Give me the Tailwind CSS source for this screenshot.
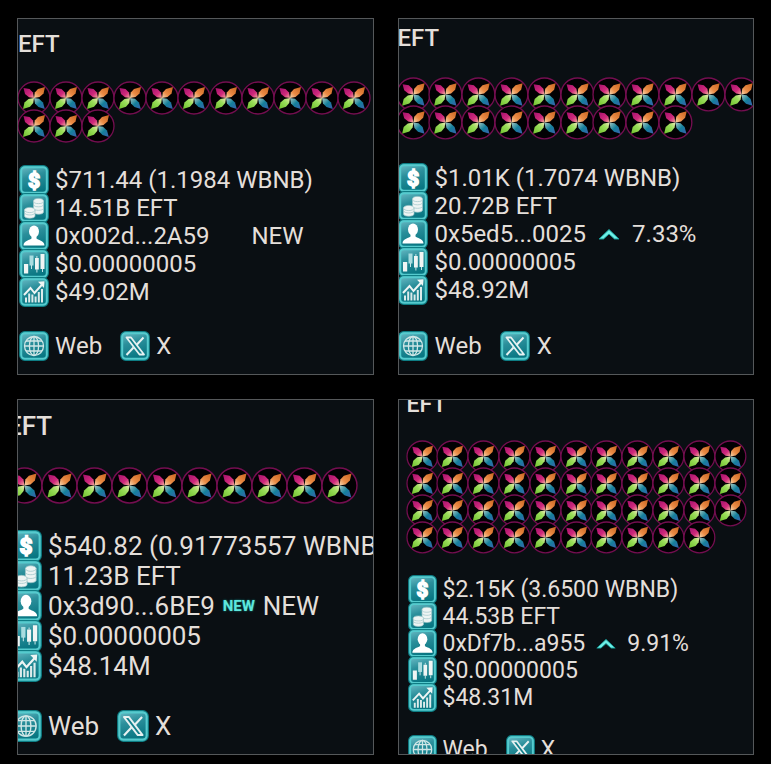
<!DOCTYPE html>
<html lang="en">
  <head>
    <meta charset="UTF-8" />
    <meta name="viewport" content="width=device-width, initial-scale=1.0" />
    <title>EFT Buys</title>
    <script src="https://cdn.jsdelivr.net/npm/@tailwindcss/browser@4"></script>
  </head>
  <body class="bg-black min-h-screen font-[Roboto,sans-serif] text-[#e4dfda]">
    <!-- icon sprite -->
    <svg class="absolute size-0" aria-hidden="true">
      <defs>
        <linearGradient id="tile" x1="0" y1="0" x2="0.3" y2="1">
          <stop offset="0" stop-color="#6fbfc9" />
          <stop offset="0.45" stop-color="#2b8f9b" />
          <stop offset="1" stop-color="#087682" />
        </linearGradient>
        <linearGradient id="pink" x1="0" y1="0" x2="1" y2="1">
          <stop offset="0" stop-color="#a3106c" />
          <stop offset="0.6" stop-color="#d02a7c" />
          <stop offset="1" stop-color="#f3b09a" />
        </linearGradient>
        <linearGradient id="orange" x1="1" y1="0" x2="0" y2="1">
          <stop offset="0" stop-color="#c8641f" />
          <stop offset="0.6" stop-color="#ea8b45" />
          <stop offset="1" stop-color="#f8d8b0" />
        </linearGradient>
        <linearGradient id="green" x1="0" y1="1" x2="1" y2="0">
          <stop offset="0" stop-color="#6fc02c" />
          <stop offset="0.6" stop-color="#9ade5a" />
          <stop offset="1" stop-color="#f0e8b8" />
        </linearGradient>
        <linearGradient id="blue" x1="1" y1="1" x2="0" y2="0">
          <stop offset="0" stop-color="#3a5fae" />
          <stop offset="0.5" stop-color="#14809c" />
          <stop offset="1" stop-color="#a8c8c0" />
        </linearGradient>
      </defs>
      <symbol id="flower" viewBox="0 0 32 32" overflow="visible">
        <circle cx="16" cy="16" r="16" fill="#020103" stroke="#740e50" stroke-width="1.3" />
        <path d="M16 16 11 15.200 7 12 5.500 6 11.500 7 15 10.500Z" fill="url(#pink)" />
        <path d="M16 16 16.800 10.500 20 7 27 5 25.500 11.500 21.500 15Z" fill="url(#orange)" />
        <path d="M16 16 15.200 21 12 24.800 5 27 6.500 20.500 10.500 17Z" fill="url(#green)" />
        <path d="M16 16 21 16.800 25 20.500 26.800 27 20.500 25 17 21.500Z" fill="url(#blue)" />
      </symbol>
      <symbol id="base" viewBox="0 0 30 30">
        <rect x="0.800" y="0.800" width="28.400" height="28.400" rx="5" fill="url(#tile)" stroke="#0e7d84" stroke-width="1.400" />
        <rect x="2.200" y="2.200" width="25.600" height="25.600" rx="3.800" fill="none" stroke="#55cbce" stroke-width="2" />
      </symbol>
      <symbol id="dollar" viewBox="0 0 30 30">
        <use href="#base" />
        <text x="15" y="22.500" text-anchor="middle" font-family="Roboto" font-size="21" font-weight="900" fill="#fff" stroke="#fff" stroke-width="1.500">$</text>
      </symbol>
      <symbol id="coins" viewBox="0 0 30 30">
        <use href="#base" />
        <g fill="#eef4f3" stroke="#9cc4c7" stroke-width="0.700">
          <path d="M14.500 8v11c0 3 10 3 10 0V8Z" />
          <ellipse cx="19.500" cy="8" rx="5" ry="2.600" />
          <path d="M14.500 12c1 2.400 9 2.400 10 0M14.500 15.500c1 2.400 9 2.400 10 0" fill="none" />
          <path d="M5.500 17v6c0 3 10.500 3 10.500 0v-6Z" />
          <ellipse cx="10.750" cy="17" rx="5.300" ry="2.600" />
          <path d="M5.500 20c1 2.600 9.500 2.600 10.500 0" fill="none" />
        </g>
      </symbol>
      <symbol id="user" viewBox="0 0 30 30">
        <use href="#base" />
        <ellipse cx="15" cy="10.500" rx="5" ry="6" fill="#fff" />
        <path d="M12.500 14h5v3.500c1 1.500 8 2 8 7H4.500c0-5 7-5.500 8-7Z" fill="#fff" />
      </symbol>
      <symbol id="candles" viewBox="0 0 30 30">
        <use href="#base" />
        <path d="M5 15h4.200v9.500H5ZM16 9h3.800v11.500H16ZM21.500 5h4v15h-4Z" fill="#f0f5f4" />
        <path d="M10.500 6.500h4v10h-4Z" fill="#a9dde0" />
        <path d="M12.500 16v4M17.900 7v2M17.900 20v3.500M23.500 20v3" stroke="#c4e6e7" stroke-width="1" />
      </symbol>
      <symbol id="chart" viewBox="0 0 30 30">
        <use href="#base" />
        <path d="M5 18 11.500 11l4 5 8.500-9.500" fill="none" stroke="#eef5f4" stroke-width="2" />
        <path d="M19 4.800 25.500 4.300 25 11Z" fill="#eef5f4" />
        <path d="M7 25.500v-5M10.200 25.500v-9M13.400 25.500v-8M16.600 25.500v-6M19.800 25.500V15M23 25.500V12" stroke="#dcebeb" stroke-width="2" />
      </symbol>
      <symbol id="globe" viewBox="0 0 30 30">
        <use href="#base" />
        <g fill="none" stroke="#cfe6e6" stroke-width="1.300">
          <circle cx="15" cy="15" r="9.500" />
          <ellipse cx="15" cy="15" rx="4.600" ry="9.500" />
          <path d="M15 5.500v19M5.500 15h19M7 10h16M7 20h16" />
        </g>
      </symbol>
      <symbol id="x-logo" viewBox="0 0 30 30">
        <use href="#base" />
        <path d="M23.500 6.500 16.500 14M13.500 16.500 6.500 24" stroke="#e6f1f1" stroke-width="2" />
        <path d="M6.500 6.500h4.500L24 23.500h-4.500Z" fill="#12808c" stroke="#e6f1f1" stroke-width="1.800" stroke-linejoin="round" />
      </symbol>
      <symbol id="up" viewBox="0 0 24 14">
        <path d="M2 12 12 2.500 22 12h-4.500L12 7 6.500 12Z" fill="#6ff0e6" stroke="#159a98" stroke-width="1" stroke-linejoin="round" />
      </symbol>
    </svg>

    <main class="grid grid-cols-2 gap-6 px-[17px] py-[18px]">
      <article class="aspect-square overflow-hidden border border-[#55585a] bg-[#0a0f13] text-2xl/[28px] whitespace-nowrap">
        <div class="flex flex-col gap-[26px] pt-[11px]">
          <h2 class="font-medium">EFT</h2>
          <div data-buys="14" class="grid w-[352px] grid-cols-11 auto-rows-[28px] items-center"></div>
          <ul class="pl-px">
            <li class="flex items-center gap-[6px]"><svg class="size-[30px] -my-px shrink-0"><use href="#dollar" /></svg>$711.44 (1.1984 WBNB)</li>
            <li class="flex items-center gap-[6px]"><svg class="size-[30px] -my-px shrink-0"><use href="#coins" /></svg>14.51B EFT</li>
            <li class="flex items-center gap-[6px]"><svg class="size-[30px] -my-px shrink-0"><use href="#user" /></svg>0x002d...2A59<span class="pl-9">NEW</span></li>
            <li class="flex items-center gap-[6px]"><svg class="size-[30px] -my-px shrink-0"><use href="#candles" /></svg>$0.00000005</li>
            <li class="flex items-center gap-[6px]"><svg class="size-[30px] -my-px shrink-0"><use href="#chart" /></svg>$49.02M</li>
          </ul>
          <nav class="flex gap-[18px] pl-px">
            <a href="#" class="flex items-center gap-[6px]"><svg class="size-[30px] -my-px shrink-0"><use href="#globe" /></svg>Web</a>
            <a href="#" class="flex items-center gap-[6px]"><svg class="size-[30px] -my-px shrink-0"><use href="#x-logo" /></svg>X</a>
          </nav>
        </div>
      </article>

      <article class="aspect-square overflow-hidden border border-[#55585a] bg-[#0a0f13] text-2xl/[28px] whitespace-nowrap">
        <div class="-ml-px flex flex-col gap-[28px] pt-[5px]">
          <h2 class="font-medium">EFT</h2>
          <div data-buys="20" class="-ml-px grid w-[361px] grid-cols-11 auto-rows-[28px] items-center"></div>
          <ul>
            <li class="flex items-center gap-[7px]"><svg class="size-[30px] -my-px shrink-0"><use href="#dollar" /></svg>$1.01K (1.7074 WBNB)</li>
            <li class="flex items-center gap-[7px]"><svg class="size-[30px] -my-px shrink-0"><use href="#coins" /></svg>20.72B EFT</li>
            <li class="flex items-center gap-[7px]"><svg class="size-[30px] -my-px shrink-0"><use href="#user" /></svg>0x5ed5...0025<svg class="mx-1 h-[14px] w-6 shrink-0"><use href="#up" /></svg>7.33%</li>
            <li class="flex items-center gap-[7px]"><svg class="size-[30px] -my-px shrink-0"><use href="#candles" /></svg>$0.00000005</li>
            <li class="flex items-center gap-[7px]"><svg class="size-[30px] -my-px shrink-0"><use href="#chart" /></svg>$48.92M</li>
          </ul>
          <nav class="flex gap-[18px]">
            <a href="#" class="flex items-center gap-[7px]"><svg class="size-[30px] -my-px shrink-0"><use href="#globe" /></svg>Web</a>
            <a href="#" class="flex items-center gap-[7px]"><svg class="size-[30px] -my-px shrink-0"><use href="#x-logo" /></svg>X</a>
          </nav>
        </div>
      </article>

      <article class="aspect-square overflow-hidden border border-[#55585a] bg-[#0a0f13] text-[26px]/[30px] whitespace-nowrap">
        <div class="-ml-[10px] flex flex-col gap-[30px] pt-[11px]">
          <h2 class="-ml-px font-medium">EFT</h2>
          <div data-buys="10" class="-ml-px grid w-[350px] grid-cols-10 auto-rows-[30px] items-center"></div>
          <ul class="pl-0.5">
            <li class="flex items-center gap-[6px]"><svg class="size-8 -my-px shrink-0"><use href="#dollar" /></svg>$540.82 (0.91773557 WBNB)</li>
            <li class="flex items-center gap-[6px]"><svg class="size-8 -my-px shrink-0"><use href="#coins" /></svg>11.23B EFT</li>
            <li class="flex items-center gap-[6px]"><svg class="size-8 -my-px shrink-0"><use href="#user" /></svg>0x3d90...6BE9<span class="w-9 shrink-0 text-center text-[15px]/[30px] font-bold text-[#5fe6dc] text-shadow-[0_0_2px_#139a98]">NEW</span>NEW</li>
            <li class="flex items-center gap-[6px]"><svg class="size-8 -my-px shrink-0"><use href="#candles" /></svg>$0.00000005</li>
            <li class="flex items-center gap-[6px]"><svg class="size-8 -my-px shrink-0"><use href="#chart" /></svg>$48.14M</li>
          </ul>
          <nav class="flex gap-[18px] pl-0.5">
            <a href="#" class="flex items-center gap-[6px]"><svg class="size-8 -my-px shrink-0"><use href="#globe" /></svg>Web</a>
            <a href="#" class="flex items-center gap-[6px]"><svg class="size-8 -my-px shrink-0"><use href="#x-logo" /></svg>X</a>
          </nav>
        </div>
      </article>

      <article class="aspect-square overflow-hidden border border-[#55585a] bg-[#0a0f13] text-[23px]/[27px] whitespace-nowrap">
        <div class="-mt-[9px] ml-2 flex flex-col gap-[25px]">
          <h2 class="font-medium">EFT</h2>
          <div data-buys="43" class="grid w-[339px] grid-cols-11 auto-rows-[27px] items-center"></div>
          <ul class="pl-px">
            <li class="flex items-center gap-[6px]"><svg class="size-[29px] -my-px shrink-0"><use href="#dollar" /></svg>$2.15K (3.6500 WBNB)</li>
            <li class="flex items-center gap-[6px]"><svg class="size-[29px] -my-px shrink-0"><use href="#coins" /></svg>44.53B EFT</li>
            <li class="flex items-center gap-[6px]"><svg class="size-[29px] -my-px shrink-0"><use href="#user" /></svg>0xDf7b...a955<svg class="mx-1 h-[13px] w-[22px] shrink-0"><use href="#up" /></svg>9.91%</li>
            <li class="flex items-center gap-[6px]"><svg class="size-[29px] -my-px shrink-0"><use href="#candles" /></svg>$0.00000005</li>
            <li class="flex items-center gap-[6px]"><svg class="size-[29px] -my-px shrink-0"><use href="#chart" /></svg>$48.31M</li>
          </ul>
          <nav class="flex gap-[18px] pl-px">
            <a href="#" class="flex items-center gap-[6px]"><svg class="size-[29px] -my-px shrink-0"><use href="#globe" /></svg>Web</a>
            <a href="#" class="flex items-center gap-[6px]"><svg class="size-[29px] -my-px shrink-0"><use href="#x-logo" /></svg>X</a>
          </nav>
        </div>
      </article>
    </main>

    <script>
      // one flower per buy step
      document.querySelectorAll("[data-buys]").forEach((row) => {
        const flower = '<svg class="aspect-square w-full overflow-visible"><use href="#flower" /></svg>';
        row.innerHTML = flower.repeat(Number(row.dataset.buys));
      });
    </script>
  </body>
</html>
